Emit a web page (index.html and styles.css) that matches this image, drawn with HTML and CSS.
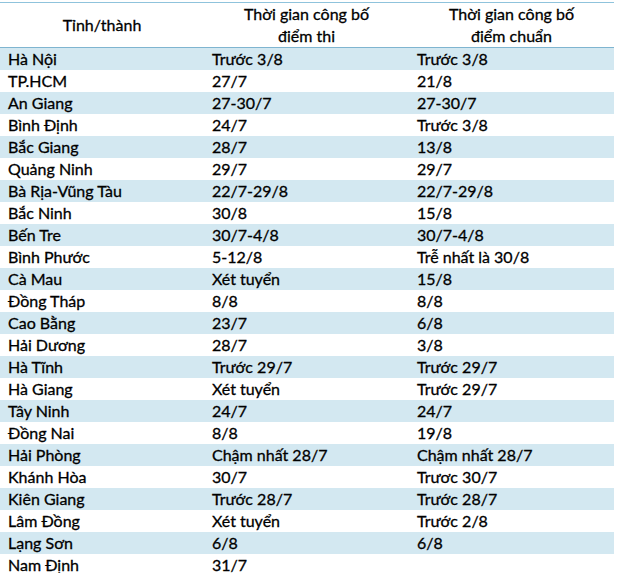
FILE: index.html
```html
<!DOCTYPE html>
<html lang="vi">
<head>
<meta charset="utf-8">
<link rel="stylesheet" href="styles.css">
</head>
<body>
<table class="sched">
  <thead>
    <tr>
      <th class="c1">Tỉnh/thành</th>
      <th class="c2">Thời gian công bố<br>điểm thi</th>
      <th class="c3">Thời gian công bố<br>điểm chuẩn</th>
    </tr>
  </thead>
  <tbody>
    <tr><td>Hà Nội</td><td>Trước 3/8</td><td>Trước 3/8</td></tr>
    <tr><td>TP.HCM</td><td>27/7</td><td>21/8</td></tr>
    <tr><td>An Giang</td><td>27-30/7</td><td>27-30/7</td></tr>
    <tr><td>Bình Định</td><td>24/7</td><td>Trước 3/8</td></tr>
    <tr><td>Bắc Giang</td><td>28/7</td><td>13/8</td></tr>
    <tr><td>Quảng Ninh</td><td>29/7</td><td>29/7</td></tr>
    <tr><td>Bà Rịa-Vũng Tàu</td><td>22/7-29/8</td><td>22/7-29/8</td></tr>
    <tr><td>Bắc Ninh</td><td>30/8</td><td>15/8</td></tr>
    <tr><td>Bến Tre</td><td>30/7-4/8</td><td>30/7-4/8</td></tr>
    <tr><td>Bình Phước</td><td>5-12/8</td><td>Trễ nhất là 30/8</td></tr>
    <tr><td>Cà Mau</td><td>Xét tuyển</td><td>15/8</td></tr>
    <tr><td>Đồng Tháp</td><td>8/8</td><td>8/8</td></tr>
    <tr><td>Cao Bằng</td><td>23/7</td><td>6/8</td></tr>
    <tr><td>Hải Dương</td><td>28/7</td><td>3/8</td></tr>
    <tr><td>Hà Tĩnh</td><td>Trước 29/7</td><td>Trước 29/7</td></tr>
    <tr><td>Hà Giang</td><td>Xét tuyển</td><td>Trước 29/7</td></tr>
    <tr><td>Tây Ninh</td><td>24/7</td><td>24/7</td></tr>
    <tr><td>Đồng Nai</td><td>8/8</td><td>19/8</td></tr>
    <tr><td>Hải Phòng</td><td>Chậm nhất 28/7</td><td>Chậm nhất 28/7</td></tr>
    <tr><td>Khánh Hòa</td><td>30/7</td><td>Trươc 30/7</td></tr>
    <tr><td>Kiên Giang</td><td>Trước 28/7</td><td>Trước 28/7</td></tr>
    <tr><td>Lâm Đồng</td><td>Xét tuyển</td><td>Trước 2/8</td></tr>
    <tr><td>Lạng Sơn</td><td>6/8</td><td>6/8</td></tr>
    <tr><td>Nam Định</td><td>31/7</td><td></td></tr>
  </tbody>
</table>
</body>
</html>
```
FILE: styles.css
```css
html, body {
  margin: 0;
  padding: 0;
  background: #ffffff;
}
body {
  padding-top: 2px;
  font-family: Lato, "Liberation Sans", sans-serif;
  font-size: 16px;
  color: #000000;
  -webkit-text-stroke: 0.3px #000000;
}
.sched {
  width: 614px;
  border-collapse: collapse;
  table-layout: fixed;
  border-top: 1px solid #8fc3dc;
}
.sched th {
  font-weight: normal;
  text-align: center;
  line-height: 22px;
  height: 44px;
  padding: 0;
  vertical-align: middle;
  border-bottom: 1px solid #7fb5d0;
}
.c1 { width: 204px; }
.c2 { width: 205px; }
.c3 { width: 205px; }
.sched td {
  height: 22px;
  line-height: 22px;
  padding: 0 0 0 8px;
  white-space: nowrap;
}
.sched tbody tr:nth-child(odd) td {
  background: #d3e8f1;
}
```
